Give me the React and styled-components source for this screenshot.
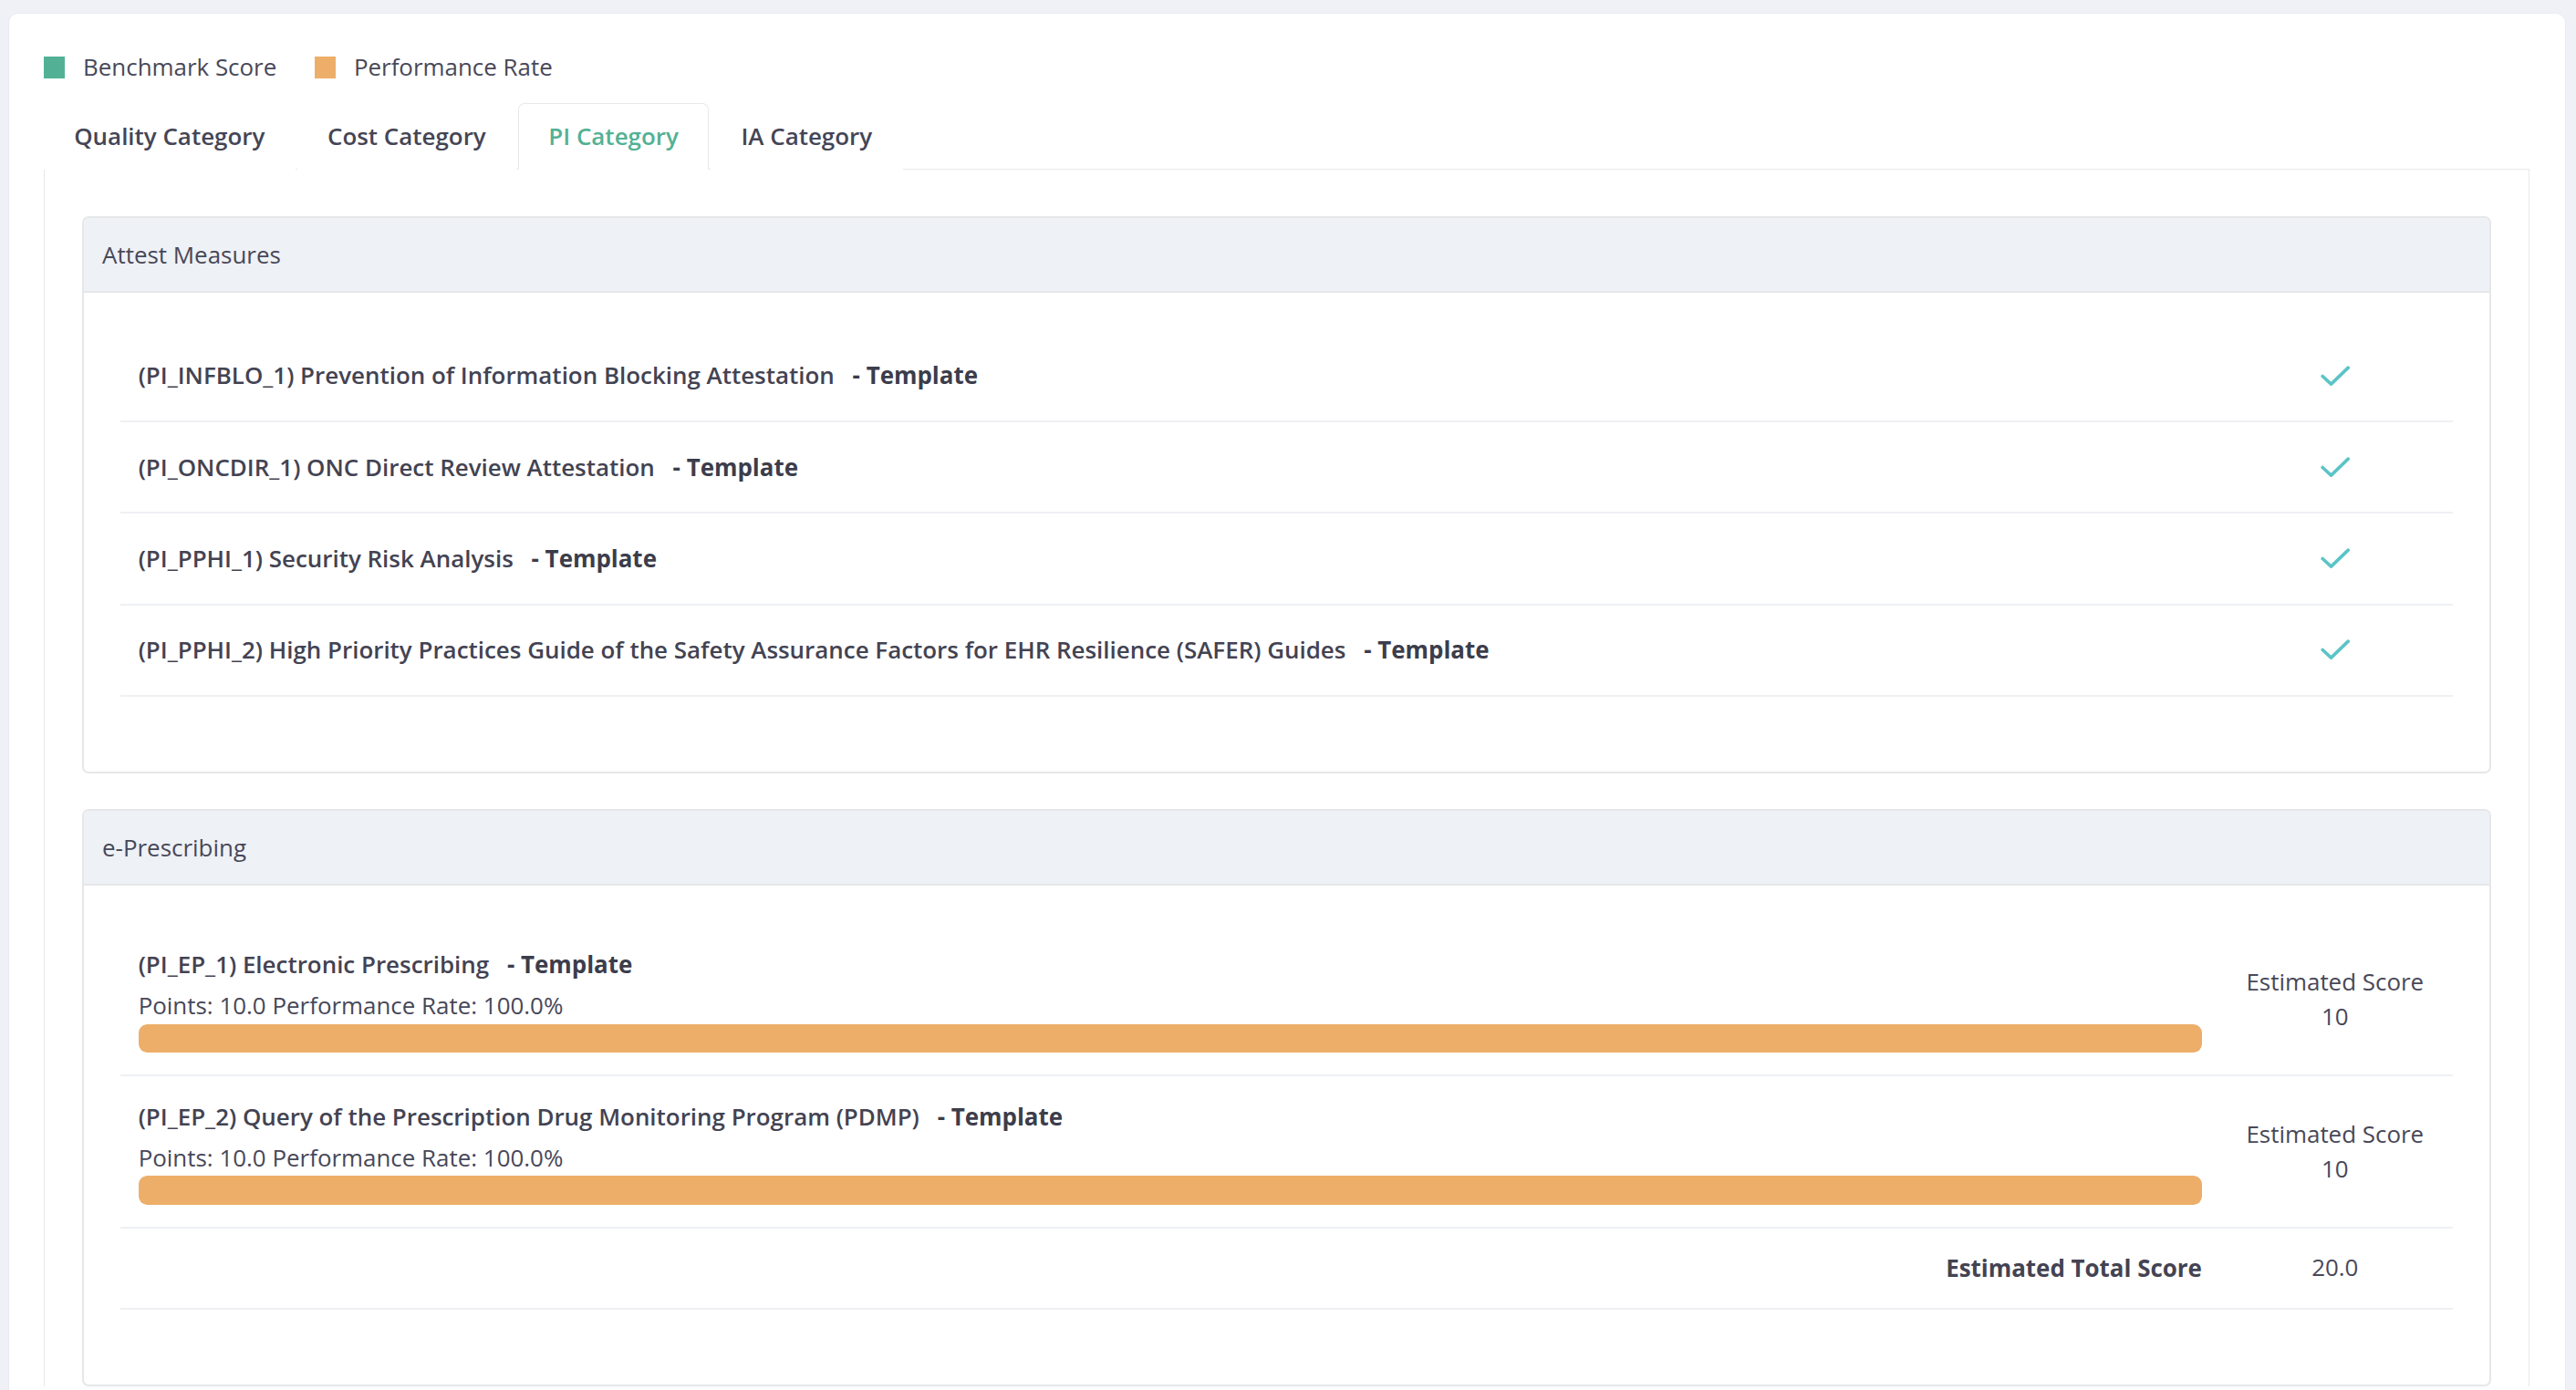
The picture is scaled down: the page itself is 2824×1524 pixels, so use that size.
import styled, { createGlobalStyle } from 'styled-components';

const GlobalStyle = createGlobalStyle`
    html, body {
        margin: 0;
        padding: 0;
        background: #eff1f6;
    }
    body {
        font-family: 'Open Sans', 'Noto Sans', sans-serif;
        color: #484858;
    }
    * {
        box-sizing: border-box;
    }
`;

const attest = [
    '(PI_INFBLO_1) Prevention of Information Blocking Attestation',
    '(PI_ONCDIR_1) ONC Direct Review Attestation',
    '(PI_PPHI_1) Security Risk Analysis',
    '(PI_PPHI_2) High Priority Practices Guide of the Safety Assurance Factors for EHR Resilience (SAFER) Guides',
];

const prescribing = [
    { title: '(PI_EP_1) Electronic Prescribing', points: '10.0', rate: 100, score: 10 },
    {
        title: '(PI_EP_2) Query of the Prescription Drug Monitoring Program (PDMP)',
        points: '10.0',
        rate: 100,
        score: 10,
    },
];

const tabs = ['Quality Category', 'Cost Category', 'PI Category', 'IA Category'];

// whole screenshot is rendered at ~1.8x
const Page = styled.div`
    zoom: 1.801;
    padding: 8px 6px 0 5px;
    font-size: 14.4px;
    line-height: 22px;
`;

const Card = styled.div`
    background: #fff;
    border: 1px solid #e9ebef;
    border-radius: 6px;
    padding: 21.5px 22px 0 21px;
    min-height: 900px;
`;

const Legend = styled.div`
    display: flex;
    align-items: center;
    gap: 23px;
    margin-bottom: 10.5px;
`;

const LegendItem = styled.div`
    display: flex;
    align-items: center;
    gap: 11px;
`;

const Swatch = styled.span`
    width: 13px;
    height: 13px;
    background: ${(p) => p.color};
`;

const TabBar = styled.div`
    display: flex;
    gap: 1px;
    border-bottom: 1px solid #e8e8ea;
    height: 41px;
`;

const Tab = styled.div`
    height: 41px;
    padding: 0 18px;
    display: flex;
    align-items: center;
    font-weight: 600;
    color: ${(p) => (p.active ? '#52b195' : '#454555')};
    background: #fff;
    border: 1px solid ${(p) => (p.active ? '#e8e8ea' : 'transparent')};
    border-bottom-color: ${(p) => (p.active ? '#fff' : 'transparent')};
    border-radius: 4px 4px 0 0;
`;

const Pane = styled.div`
    border-left: 1px solid #e8e8ea;
    border-right: 1px solid #e8e8ea;
    padding: 28px 22.5px 0 23px;
    display: flex;
    flex-direction: column;
    gap: 22px;
`;

const Panel = styled.div`
    border: 1.5px solid #e6e7e9;
    border-radius: 4px;
    overflow: hidden;
`;

const PanelHeader = styled.div`
    background: #eef1f6;
    border-bottom: 1.5px solid #e6e7e9;
    padding: 11.5px 11px;
    height: 45.5px;
`;

const PanelBody = styled.div`
    padding: 23.5px 22px 45.5px 22px;
`;

const Row = styled.div`
    display: flex;
    align-items: center;
    padding: ${(p) => p.pad || '16.25px'} 0 ${(p) => p.pad || '16.25px'} 11px;
    border-bottom: 1.5px solid #eef0f4;
`;

const Main = styled.div`
    flex: 1;
    min-width: 0;
`;

const Title = styled.span`
    font-weight: 600;
    color: #434352;
`;

const Tag = styled.span`
    font-weight: 700;
    color: #3c3d4b;
    margin-left: 11px;
`;

const Points = styled.div`
    margin-top: 3px;
`;

const Track = styled.div`
    height: 17.5px;
    border-radius: 5px;
    background: #f1f1f3;
    overflow: hidden;
`;

const Fill = styled.div`
    height: 100%;
    background: #edae69;
    border-radius: 5px;
`;

const Side = styled.div`
    width: 144px;
    margin-left: 9px;
    flex-shrink: 0;
    display: flex;
    flex-direction: column;
    align-items: center;
    text-align: center;
    line-height: 21px;
`;

const TotalLabel = styled.div`
    flex: 1;
    text-align: right;
    font-weight: 700;
    color: #434352;
`;

const Check = () => (
    <svg width="18" height="13" viewBox="0 0 18 13" fill="none">
        <polyline
            points="1.2,6.4 6.4,11.2 16.8,1.2"
            stroke="#5bc4c6"
            strokeWidth="2"
            strokeLinecap="round"
            strokeLinejoin="round"
        />
    </svg>
);

export default function App() {
    return (
        <Page>
            <GlobalStyle />
            <Card>
                <Legend>
                    <LegendItem>
                        <Swatch color="#52b195" />
                        Benchmark Score
                    </LegendItem>
                    <LegendItem>
                        <Swatch color="#edae69" />
                        Performance Rate
                    </LegendItem>
                </Legend>
                <TabBar>
                    {tabs.map((t) => (
                        <Tab key={t} active={t === 'PI Category'}>
                            {t}
                        </Tab>
                    ))}
                </TabBar>
                <Pane>
                    <Panel>
                        <PanelHeader>Attest Measures</PanelHeader>
                        <PanelBody>
                            {attest.map((m) => (
                                <Row key={m}>
                                    <Main>
                                        <Title>{m}</Title>
                                        <Tag>- Template</Tag>
                                    </Main>
                                    <Side>
                                        <Check />
                                    </Side>
                                </Row>
                            ))}
                        </PanelBody>
                    </Panel>
                    <Panel>
                        <PanelHeader>e-Prescribing</PanelHeader>
                        <PanelBody>
                            {prescribing.map((m) => (
                                <Row key={m.title} pad="13.5px">
                                    <Main>
                                        <Title>{m.title}</Title>
                                        <Tag>- Template</Tag>
                                        <Points>
                                            Points: {m.points} Performance Rate: {m.rate.toFixed(1)}%
                                        </Points>
                                        <Track>
                                            <Fill style={{ width: `${m.rate}%` }} />
                                        </Track>
                                    </Main>
                                    <Side>
                                        <div>Estimated Score</div>
                                        <div>{m.score}</div>
                                    </Side>
                                </Row>
                            ))}
                            <Row pad="13px">
                                <TotalLabel>Estimated Total Score</TotalLabel>
                                <Side>20.0</Side>
                            </Row>
                        </PanelBody>
                    </Panel>
                </Pane>
            </Card>
        </Page>
    );
}
